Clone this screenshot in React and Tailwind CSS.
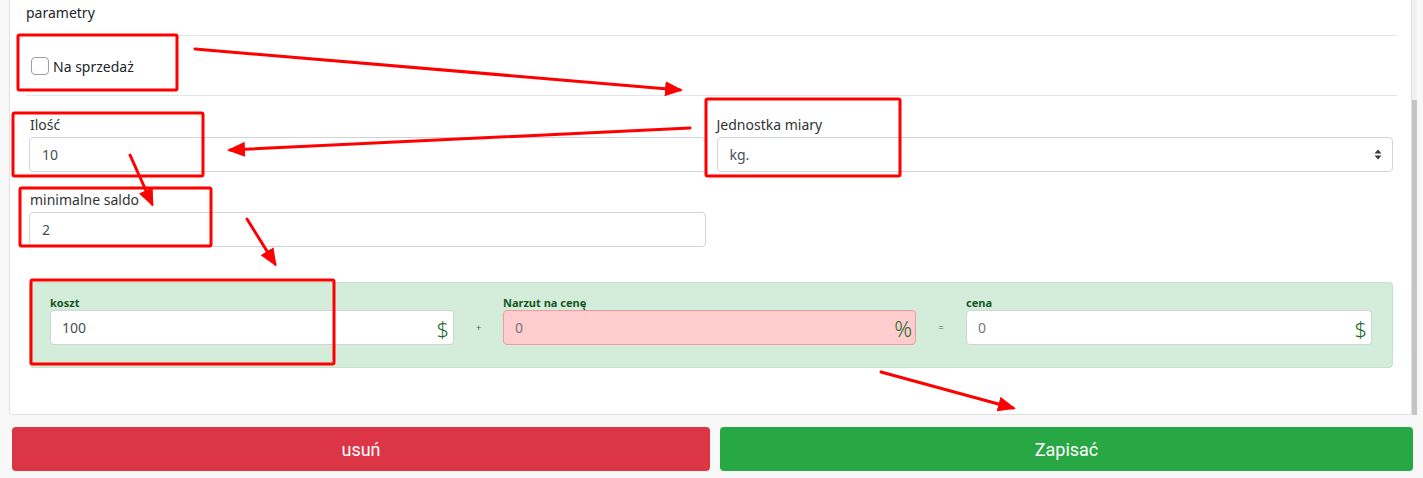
import React from "react";

const font = { fontFamily: '"Noto Sans", "Open Sans", sans-serif' };

function Dollar() {
  return <span className="text-[22px] leading-none font-light text-[#1e6b30]">$</span>;
}

export default function App() {
  return (
    <div className="relative w-[1423px] h-[478px] overflow-hidden bg-[#f8f8f8] text-[#212529]" style={font}>
      <div className="flex h-[415px] pl-[9px]">
        <div className="w-[1403px] h-full bg-white border-x border-b border-[#e0e0e0] rounded-b-[4px] pl-[16px] pr-[14px] flex flex-col">
          <div className="h-[36px] pt-[2px] text-[14px] leading-[22px] border-b border-[#e4e4e4]">parametry</div>
          <div className="h-[60px] border-b border-[#e4e4e4] flex items-center pl-[5px] pt-[1px]">
            <div className="w-[18px] h-[18px] rounded-[4px] border border-[#9aa0a6] bg-white"></div>
            <span className="ml-[4px] text-[14px]">Na sprzedaż</span>
          </div>
          <div className="flex gap-[11px] pl-[3px] pr-[4px] pt-[16px]">
            <div className="flex-1">
              <div className="text-[14px] leading-[25px] pl-[1px] text-[#333]">Ilość</div>
              <div className="h-[35px] border border-[#d0d4d9] rounded-[4px] flex items-center px-[12px] text-[14px] text-[#495057]">10</div>
            </div>
            <div className="flex-1">
              <div className="text-[14px] leading-[25px] text-[#333]">Jednostka miary</div>
              <div className="h-[35px] border border-[#d0d4d9] rounded-[4px] flex items-center justify-between pl-[12px] pr-[10px] text-[14px] text-[#495057]">
                <span>kg.</span>
                <svg width="8" height="11" viewBox="0 0 8 11"><path d="M4 0.5 L7.5 4.5 H0.5Z M4 10.5 L7.5 6.5 H0.5Z" fill="#343a40"/></svg>
              </div>
            </div>
          </div>
          <div className="flex gap-[11px] pl-[3px] pr-[4px] pt-[16px]">
            <div className="flex-1">
              <div className="text-[14px] leading-[24px] pl-[1px] text-[#333]">minimalne saldo</div>
              <div className="h-[35px] border border-[#d0d4d9] rounded-[4px] flex items-center px-[12px] text-[14px] text-[#495057]">2</div>
            </div>
            <div className="flex-1"></div>
          </div>
          <div className="mt-[35px] ml-[3px] mr-[4px] h-[86px] bg-[#d4edda] border border-[#c3e6cb] rounded-[4px] px-[20px] pt-[12px] flex items-start">
            <div className="w-[404px]">
              <div className="text-[11px] font-bold leading-[15px] text-[#155724]">koszt</div>
              <div className="h-[35px] bg-white border border-[#cfd4d8] rounded-[4px] flex items-center justify-between pl-[11px] pr-[4px] text-[14px] text-[#495057]">
                <span>100</span><Dollar />
              </div>
            </div>
            <div className="w-[49px] pt-[15px] h-[50px] flex items-center justify-center text-[9px] text-[#3a6b45]">+</div>
            <div className="flex-1">
              <div className="text-[11px] font-bold leading-[15px] text-[#155724]">Narzut na cenę</div>
              <div className="h-[35px] bg-[#ffcdcd] border border-[#f19aa0] rounded-[4px] flex items-center justify-between pl-[11px] pr-[3px] text-[14px] text-[#777]">
                <span>0</span><span className="text-[22px] leading-none font-light text-[#1e6b30]">%</span>
              </div>
            </div>
            <div className="w-[50px] pt-[15px] h-[50px] flex items-center justify-center text-[9px] text-[#3a6b45]">=</div>
            <div className="w-[406px]">
              <div className="text-[11px] font-bold leading-[15px] text-[#155724]">cena</div>
              <div className="h-[35px] bg-white border border-[#cfd4d8] rounded-[4px] flex items-center justify-between pl-[11px] pr-[4px] text-[14px] text-[#777]">
                <span>0</span><Dollar />
              </div>
            </div>
          </div>
        </div>
        <div className="w-[5px] h-full bg-[#f1f1f1] flex flex-col">
          <div className="mt-[100px] flex-1 bg-[#c4c4c4]"></div>
        </div>
      </div>
      <div className="flex gap-[10px] pl-[12px] pr-[10px] pt-[12px]">
        <button className="w-[698px] h-[44px] rounded-[4px] bg-[#dc3545] text-white text-[18px]" style={{ fontFamily: '"Liberation Sans Narrow", "Roboto", sans-serif' }}>usuń</button>
        <button className="flex-1 h-[44px] rounded-[4px] bg-[#28a745] text-white text-[18px]" style={{ fontFamily: '"Liberation Sans Narrow", "Roboto", sans-serif' }}>Zapisać</button>
      </div>
      <svg className="absolute inset-0 pointer-events-none" width="1423" height="478">
        <defs>
          <marker id="ah" markerWidth="6" markerHeight="5" refX="5" refY="2.5" orient="auto" markerUnits="strokeWidth">
            <path d="M0 0 L6 2.5 L0 5Z" fill="#ff0000" />
          </marker>
        </defs>
        <g fill="none" stroke="#ff0000" strokeWidth="3">
          <rect x="18" y="35" width="159" height="55" rx="1.5" />
          <rect x="13" y="113" width="190" height="63" rx="1.5" />
          <rect x="706" y="99" width="194" height="77" rx="1.5" />
          <rect x="20" y="188" width="191" height="58" rx="1.5" />
          <rect x="31" y="280" width="303" height="84" rx="1.5" />
        </g>
        <g stroke="#ff0000" strokeWidth="3" strokeLinecap="round" markerEnd="url(#ah)">
          <line x1="195" y1="49" x2="680" y2="90" />
          <line x1="690" y1="128" x2="230" y2="150" />
          <line x1="130" y1="155" x2="152" y2="204" />
          <line x1="247" y1="219" x2="275" y2="264" />
          <line x1="881" y1="372" x2="1013" y2="408" />
        </g>
      </svg>
    </div>
  );
}
